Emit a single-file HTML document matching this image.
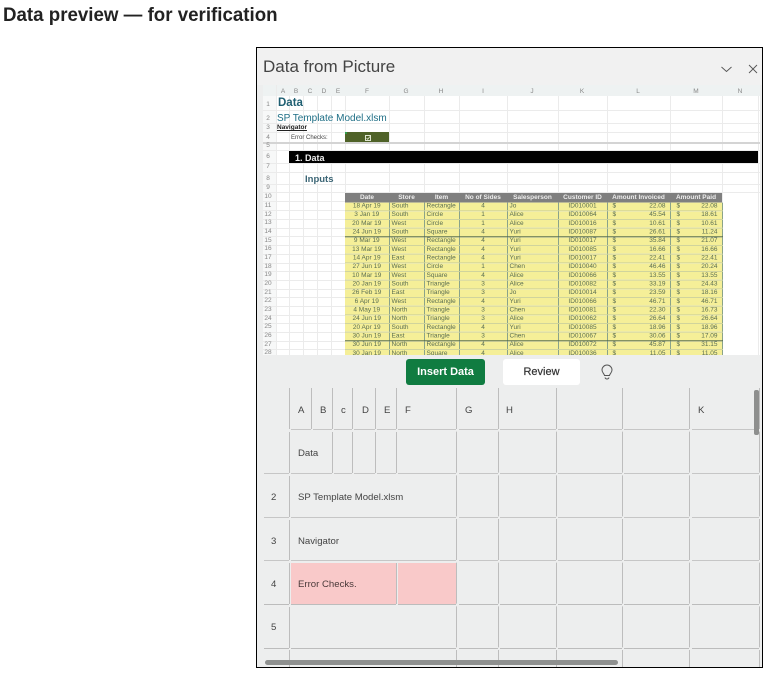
<!DOCTYPE html>
<html lang="en">
<head>
<meta charset="utf-8">
<title>Data preview</title>
<style>
html,body{margin:0;padding:0;background:#fff;width:772px;height:691px;overflow:hidden;font-family:"Liberation Sans",sans-serif}
.a{position:absolute;white-space:nowrap}
#h1{left:3px;top:6px;font-size:19px;line-height:20px;font-weight:700;color:#222;transform-origin:0 0;transform:scaleX(.985)}
#dlg{left:256px;top:47px;width:505px;height:619px;border:1px solid #000;background:#edeeee}
#top{left:257px;top:48px;width:505px;height:37px;background:#f1f1f1}
#title{left:263px;top:56px;font-size:17px;line-height:22px;color:#444}
#sheet{left:0;top:0;width:772px;height:691px;clip-path:inset(85px 12px 336px 263px);filter:blur(.3px)}
#sheet .a{font-size:6px;line-height:8px}
#sheet .cl{color:#888;text-align:center;width:20px;top:88px;font-size:6.5px}
#sheet .rn{color:#888;left:258px;width:20px;text-align:center;font-size:6.5px}
table{position:absolute;left:345px;top:193px;width:377px;border-collapse:collapse;table-layout:fixed;font-size:6.5px;color:#5a6e52;transform-origin:0 0;transform:scaleY(.963)}
td,th{padding:0 2px;overflow:hidden;white-space:nowrap;line-height:8px}
th{height:10px;background:#7f7f7f;color:#eee;font-weight:700;text-align:center;padding:0}
tr.d td{height:7.67px;background:#f5ef98;border-bottom:1px solid #cfd39a;border-right:1px solid #8aa38a}
tr.d td.i{padding:0 4px 0 5px;text-align:right}
tr.d td.p{padding:0 4px 0 6px;text-align:right}
td i{float:left;font-style:normal}
tr.k td{border-bottom-color:#4a6248!important}
.c{text-align:center}
.g{font-size:9.6px;line-height:12px;color:#444}
#ins{left:406px;top:359px;width:79px;height:26px;border-radius:3px;background:#107c41;color:#fff;font-size:11px;font-weight:700;line-height:26px;text-align:center}
#rev{left:503px;top:359px;width:77px;height:26px;border-radius:3px;background:#fff;color:#333;font-size:11px;line-height:26px;text-align:center;-webkit-text-stroke:.2px #333}
</style>
</head>
<body>
<div class="a" id="h1">Data preview — for verification</div>
<div class="a" id="dlg"></div>
<div class="a" id="top"></div>
<div class="a" id="title">Data from Picture</div>
<svg class="a" style="left:715px;top:58px" width="48" height="20" viewBox="715 58 48 20" fill="none" stroke="#555" stroke-width=".9"><path d="M721.500 67l5 4.500 5-4.500M749 65l8 8M757 65l-8 8"/></svg>

<div class="a" id="sheet">
<div class="a" style="left:263px;top:85px;width:497px;height:270px;background:#fff"></div>
<div class="a" style="left:263px;top:85px;width:13px;height:270px;background:#f7f8f8"></div>
<div class="a" style="left:263px;top:85px;width:497px;height:11px;background:#eef2f2"></div>
<svg class="a" style="left:0;top:0" width="772" height="691" fill="none" stroke="#ebebeb" stroke-width="1">
<path d="M276.500 85V355M289.500 96V355M303.500 96V355M317.500 96V355M331.500 96V355M345.500 96V355M389.500 96V355M424.500 96V355M459.500 96V355M507.500 96V355M558.500 96V355M607.500 96V355M670.500 96V355M722.500 96V355M758.500 96V355"/>
<path d="M263 110.500H760M263 123.500H760M263 132.500H760M263 142.500H760M263 150.500H760M263 163.500H760M263 172.500H760M263 184.500H760M263 192.500H760M263 201.500H345M263 210.500H345M263 219.500H345M263 228.500H345M263 236.500H345M263 245.500H345M263 254.500H345M263 263.500H345M263 271.500H345M263 280.500H345M263 289.500H345M263 297.500H345M263 306.500H345M263 315.500H345M263 323.500H345M263 332.500H345M263 341.500H345M263 349.500H345"/>
<path d="M263 143H760" stroke="#d4d4d4" stroke-width="2"/>
</svg>
<div class="a cl" style="left:273px">A</div><div class="a cl" style="left:286px">B</div><div class="a cl" style="left:300px">C</div><div class="a cl" style="left:314px">D</div><div class="a cl" style="left:328px">E</div><div class="a cl" style="left:357px">F</div><div class="a cl" style="left:396px">G</div><div class="a cl" style="left:431px">H</div><div class="a cl" style="left:473px">I</div><div class="a cl" style="left:522px">J</div><div class="a cl" style="left:572px">K</div><div class="a cl" style="left:628px">L</div><div class="a cl" style="left:686px">M</div><div class="a cl" style="left:730px">N</div>
<div class="a rn" style="top:101px">1</div><div class="a rn" style="top:115px">2</div><div class="a rn" style="top:124px">3</div><div class="a rn" style="top:134px">4</div><div class="a rn" style="top:142px">5</div><div class="a rn" style="top:153px">6</div><div class="a rn" style="top:163px">7</div><div class="a rn" style="top:175px">8</div><div class="a rn" style="top:184px">9</div><div class="a rn" style="top:193px">10</div><div class="a rn" style="top:202px">11</div><div class="a rn" style="top:211px">12</div><div class="a rn" style="top:219px">13</div><div class="a rn" style="top:228px">14</div><div class="a rn" style="top:237px">15</div><div class="a rn" style="top:245px">16</div><div class="a rn" style="top:254px">17</div><div class="a rn" style="top:263px">18</div><div class="a rn" style="top:271px">19</div><div class="a rn" style="top:280px">20</div><div class="a rn" style="top:289px">21</div><div class="a rn" style="top:297px">22</div><div class="a rn" style="top:306px">23</div><div class="a rn" style="top:315px">24</div><div class="a rn" style="top:323px">25</div><div class="a rn" style="top:332px">26</div><div class="a rn" style="top:341px">27</div><div class="a rn" style="top:349px">28</div>
<div class="a" style="left:278px;top:97px;font-weight:700;color:#1f5f72"><span style="font-size:11.500px;line-height:13px">Data</span></div>
<div class="a" style="left:277px;top:112px;color:#1f6f86"><span style="font-size:10px;line-height:13px">SP Template Model.xlsm</span></div>
<div class="a" style="left:277px;top:124px;font-weight:700;color:#222;text-decoration:underline"><span style="font-size:6.500px">Navigator</span></div>
<div class="a" style="left:291px;top:134px;color:#444">Error Checks:</div>
<div class="a" style="left:345px;top:132px;width:44px;height:10px;background:#4f6228"></div>
<div class="a" style="left:345px;top:132px;width:2px;height:2px;background:#2f9a4a"></div>
<div class="a" style="left:365px;top:135px;width:4px;height:4px;border:1px solid #dfe6d0"></div>
<svg class="a" style="left:365px;top:135px" width="7" height="6" fill="none" stroke="#e6ecd8" stroke-width=".8"><path d="M1.500 3l1.200 1.300L5 1.500"/></svg>
<div class="a" style="left:289px;top:151px;width:469px;height:12px;background:#000"></div>
<div class="a" style="left:295px;top:153px;color:#eee;font-weight:700"><span style="font-size:9px;line-height:10px">1. Data</span></div>
<div class="a" style="left:305px;top:174px;color:#3b6575;font-weight:700"><span style="font-size:9.500px;line-height:12px">Inputs</span></div>
<table>
<colgroup><col style="width:44px"><col style="width:35px"><col style="width:35px"><col style="width:48px"><col style="width:51px"><col style="width:49px"><col style="width:63px"><col style="width:52px"></colgroup>
<tr><th>Date</th><th>Store</th><th>Item</th><th>No of Sides</th><th>Salesperson</th><th>Customer ID</th><th>Amount Invoiced</th><th>Amount Paid</th></tr>
<tr class="d"><td class="c">18 Apr 19</td><td>South</td><td>Rectangle</td><td class="c">4</td><td>Jo</td><td class="c">ID010001</td><td class="i"><i>$</i>22.08</td><td class="p"><i>$</i>22.08</td></tr>
<tr class="d"><td class="c">3 Jan 19</td><td>South</td><td>Circle</td><td class="c">1</td><td>Alice</td><td class="c">ID010064</td><td class="i"><i>$</i>45.54</td><td class="p"><i>$</i>18.61</td></tr>
<tr class="d"><td class="c">20 Mar 19</td><td>West</td><td>Circle</td><td class="c">1</td><td>Alice</td><td class="c">ID010016</td><td class="i"><i>$</i>10.61</td><td class="p"><i>$</i>10.61</td></tr>
<tr class="d k"><td class="c">24 Jun 19</td><td>South</td><td>Square</td><td class="c">4</td><td>Yuri</td><td class="c">ID010087</td><td class="i"><i>$</i>26.61</td><td class="p"><i>$</i>11.24</td></tr>
<tr class="d"><td class="c">9 Mar 19</td><td>West</td><td>Rectangle</td><td class="c">4</td><td>Yuri</td><td class="c">ID010017</td><td class="i"><i>$</i>35.84</td><td class="p"><i>$</i>21.07</td></tr>
<tr class="d"><td class="c">13 Mar 19</td><td>West</td><td>Rectangle</td><td class="c">4</td><td>Yuri</td><td class="c">ID010085</td><td class="i"><i>$</i>16.66</td><td class="p"><i>$</i>16.66</td></tr>
<tr class="d"><td class="c">14 Apr 19</td><td>East</td><td>Rectangle</td><td class="c">4</td><td>Yuri</td><td class="c">ID010017</td><td class="i"><i>$</i>22.41</td><td class="p"><i>$</i>22.41</td></tr>
<tr class="d"><td class="c">27 Jun 19</td><td>West</td><td>Circle</td><td class="c">1</td><td>Chen</td><td class="c">ID010040</td><td class="i"><i>$</i>46.46</td><td class="p"><i>$</i>20.24</td></tr>
<tr class="d"><td class="c">10 Mar 19</td><td>West</td><td>Square</td><td class="c">4</td><td>Alice</td><td class="c">ID010066</td><td class="i"><i>$</i>13.55</td><td class="p"><i>$</i>13.55</td></tr>
<tr class="d"><td class="c">20 Jan 19</td><td>South</td><td>Triangle</td><td class="c">3</td><td>Alice</td><td class="c">ID010082</td><td class="i"><i>$</i>33.19</td><td class="p"><i>$</i>24.43</td></tr>
<tr class="d"><td class="c">26 Feb 19</td><td>East</td><td>Triangle</td><td class="c">3</td><td>Jo</td><td class="c">ID010014</td><td class="i"><i>$</i>23.59</td><td class="p"><i>$</i>18.16</td></tr>
<tr class="d"><td class="c">6 Apr 19</td><td>West</td><td>Rectangle</td><td class="c">4</td><td>Yuri</td><td class="c">ID010066</td><td class="i"><i>$</i>46.71</td><td class="p"><i>$</i>46.71</td></tr>
<tr class="d"><td class="c">4 May 19</td><td>North</td><td>Triangle</td><td class="c">3</td><td>Chen</td><td class="c">ID010081</td><td class="i"><i>$</i>22.30</td><td class="p"><i>$</i>16.73</td></tr>
<tr class="d"><td class="c">24 Jun 19</td><td>North</td><td>Triangle</td><td class="c">3</td><td>Alice</td><td class="c">ID010062</td><td class="i"><i>$</i>26.64</td><td class="p"><i>$</i>26.64</td></tr>
<tr class="d"><td class="c">20 Apr 19</td><td>South</td><td>Rectangle</td><td class="c">4</td><td>Yuri</td><td class="c">ID010085</td><td class="i"><i>$</i>18.96</td><td class="p"><i>$</i>18.96</td></tr>
<tr class="d k"><td class="c">30 Jun 19</td><td>East</td><td>Triangle</td><td class="c">3</td><td>Chen</td><td class="c">ID010067</td><td class="i"><i>$</i>30.06</td><td class="p"><i>$</i>17.09</td></tr>
<tr class="d"><td class="c">30 Jun 19</td><td>North</td><td>Rectangle</td><td class="c">4</td><td>Alice</td><td class="c">ID010072</td><td class="i"><i>$</i>45.87</td><td class="p"><i>$</i>31.15</td></tr>
<tr class="d"><td class="c">30 Jan 19</td><td>North</td><td>Square</td><td class="c">4</td><td>Alice</td><td class="c">ID010036</td><td class="i"><i>$</i>11.05</td><td class="p"><i>$</i>11.05</td></tr>
</table>
</div>

<div class="a" id="ins">Insert Data</div>
<div class="a" id="rev">Review</div>
<svg class="a" style="left:600px;top:364px" width="14" height="17" viewBox="0 0 14 17" fill="none" stroke="#555" stroke-width="1"><path d="M4.500 11.500C4 9.500 2 8.500 2 6a5 5 0 0 1 10 0c0 2.500-2 3.500-2.500 5.500zM5 13.500c.3 1 1 1.500 2 1.500s1.700-.5 2-1.500"/></svg>

<div class="a" style="left:291px;top:563px;width:105px;height:41px;background:#f9c9c9"></div>
<div class="a" style="left:398px;top:563px;width:58px;height:41px;background:#f9c9c9"></div>
<svg class="a" style="left:0;top:0" width="772" height="667" fill="none" stroke-width="1">
<g stroke="#c6c6c6">
<path d="M291 429.500H311M313 429.500H332M334 429.500H352M354 429.500H375M377 429.500H396M398 429.500H456M459 429.500H498M500 429.500H556M558 429.500H622M624 429.500H689M692 429.500H759"/>
<path d="M264 473.500H289M291 473.500H332M334 473.500H352M354 473.500H375M377 473.500H396M398 473.500H456M459 473.500H498M500 473.500H556M558 473.500H622M624 473.500H689M692 473.500H759"/>
<path d="M264 517.500H289M291 517.500H456M459 517.500H498M500 517.500H556M558 517.500H622M624 517.500H689M692 517.500H759"/>
<path d="M264 560.500H289M291 560.500H456M459 560.500H498M500 560.500H556M558 560.500H622M624 560.500H689M692 560.500H759"/>
<path d="M264 604.500H289M291 604.500H396M398 604.500H456M459 604.500H498M500 604.500H556M558 604.500H622M624 604.500H689M692 604.500H759" stroke="#bcbcbc"/>
<path d="M264 648.500H289M291 648.500H456M459 648.500H498M500 648.500H556M558 648.500H622M624 648.500H689M692 648.500H759" stroke="#bcbcbc"/>
</g>
<g stroke="#bdbdbd">
<path d="M289.500 388V429M289.500 432V473M289.500 476V517M289.500 520V560M289.500 563V604M289.500 607V648M289.500 650V667"/>
<path d="M311.500 388V429M332.500 388V429M332.500 432V473M352.500 388V429M352.500 432V473M375.500 388V429M375.500 432V473M396.500 388V429M396.500 432V473M396.500 563V604"/>
<path stroke-dasharray="41 2.670" d="M456.500 388V667M498.500 388V667M556.500 388V667M622.500 388V667M689.500 388V667M759.500 388V667"/>
</g>
</svg>
<div class="a g" style="left:298px;top:405px">A</div><div class="a g" style="left:320px;top:405px">B</div><div class="a g" style="left:341px;top:405px">c</div><div class="a g" style="left:362px;top:405px">D</div><div class="a g" style="left:384px;top:405px">E</div><div class="a g" style="left:405px;top:405px">F</div><div class="a g" style="left:465px;top:405px">G</div><div class="a g" style="left:506px;top:405px">H</div><div class="a g" style="left:698px;top:405px">K</div>
<div class="a g" style="left:298px;top:448px">Data</div>
<div class="a g" style="left:298px;top:492px">SP Template Model.xlsm</div>
<div class="a g" style="left:298px;top:536px">Navigator</div>
<div class="a g" style="left:298px;top:579px;color:#4a3a3a">Error Checks.</div>
<div class="a g" style="left:271px;top:492px">2</div><div class="a g" style="left:271px;top:536px">3</div><div class="a g" style="left:271px;top:579px">4</div><div class="a g" style="left:271px;top:622px">5</div>
<div class="a" style="left:754px;top:390px;width:5px;height:45px;border-radius:2px;background:#8e8f8e"></div>
<div class="a" style="left:265px;top:660px;width:353px;height:5px;border-radius:2.500px;background:#8e908f"></div>
</body>
</html>
